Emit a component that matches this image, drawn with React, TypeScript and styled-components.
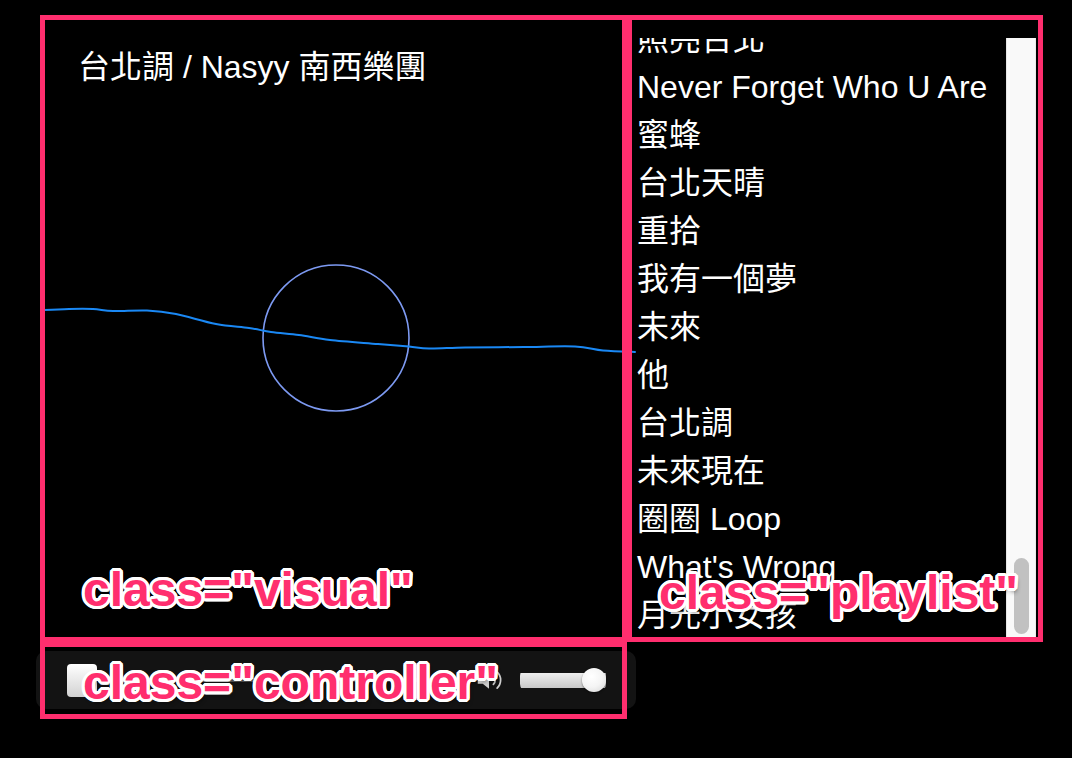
import React from 'react';
import styled, { createGlobalStyle, css } from 'styled-components';

const PINK = '#ff2e6e';

const Global = createGlobalStyle`
  html, body { margin: 0; padding: 0; background: #000; }
  body {
    font-family: "Liberation Sans", "Noto Sans CJK TC", sans-serif;
    color: #fff;
    overflow: hidden;
  }
`;

const pinkBox = css`
  position: relative;
  &::after {
    content: '';
    position: absolute;
    border: 5px solid ${PINK};
    pointer-events: none;
    z-index: 3;
  }
`;

const Stage = styled.div`
  width: 1072px;
  height: 758px;
  box-sizing: border-box;
  padding: 15px 0 0 40px;
  display: flex;
  flex-direction: column;
`;

const TopRow = styled.div`
  display: flex;
`;

const Visual = styled.section`
  ${pinkBox}
  &::after { inset: 0; }
  width: 587px;
  height: 627px;
  box-sizing: border-box;
  padding: 5px;
  display: flex;
  flex-direction: column;
`;

const Title = styled.div`
  padding: 29px 0 0 33px;
  height: 66px;
  box-sizing: border-box;
  font-size: 32px;
  line-height: 36px;
  white-space: nowrap;
`;

const Canvas = styled.svg`
  display: block;
  overflow: visible;
  position: relative;
  z-index: 2;
`;

const Playlist = styled.section`
  ${pinkBox}
  &::after { inset: 0; }
  width: 416px;
  height: 627px;
  box-sizing: border-box;
  padding: 23px 7px 3px 5px;
  display: flex;
`;

const List = styled.ul`
  flex: 1;
  margin: 0;
  padding: 0;
  list-style: none;
  overflow: hidden;
  display: flex;
  flex-direction: column;
  justify-content: flex-end;
`;

const Item = styled.li`
  flex: none;
  height: 48px;
  line-height: 48px;
  padding-left: 5px;
  font-size: 32px;
  white-space: nowrap;
`;

const Track = styled.div`
  width: 30px;
  box-sizing: border-box;
  background: #f9f9f9;
  border-left: 1px solid #e6e6e6;
  border-right: 1px solid #ececec;
  display: flex;
  flex-direction: column;
  justify-content: flex-end;
  padding: 0 6px 5px 7px;
`;

const Thumb = styled.div`
  height: 76px;
  border-radius: 8px;
  background: #c1c1c1;
`;

const Controller = styled.div`
  ${pinkBox}
  &::after { top: -9px; left: 4px; right: 9px; bottom: -10px; }
  margin: 9px 0 0 -4px;
  width: 600px;
  height: 58px;
  box-sizing: border-box;
  background: #131313;
  border-radius: 10px;
  padding: 0 30px 0 31px;
  display: flex;
  align-items: center;
`;

const PlayButton = styled.div`
  width: 30px;
  height: 33px;
  border-radius: 4px;
  background: linear-gradient(#ffffff, #d2d2d2);
  flex: none;
`;

const Progress = styled.div`
  flex: 1;
  height: 4px;
  margin: 0 10px 0 12px;
  border-radius: 2px;
  background: #555;
`;

const VolumeIcon = styled.svg`
  flex: none;
  width: 30px;
  height: 30px;
  color: #d0d0d0;
`;

const Slider = styled.div`
  flex: none;
  margin-left: 16px;
  width: 86px;
  height: 24px;
  display: flex;
  align-items: center;
  justify-content: flex-end;
  border-radius: 8px;
  background: linear-gradient(#eeeeee, #c8c8c8) center / 100% 15px no-repeat;
`;

const Knob = styled.div`
  width: 24px;
  height: 24px;
  border-radius: 50%;
  background: radial-gradient(circle at 40% 35%, #ffffff 0%, #f4f4f4 50%, #d6d6d6 100%);
  box-shadow: 0 1px 2px rgba(0, 0, 0, 0.5);
`;

const Label = styled.span<{ $left: number; $top: number }>`
  position: absolute;
  left: ${p => p.$left}px;
  top: ${p => p.$top}px;
  z-index: 5;
  font-family: "Liberation Sans", Arial, sans-serif;
  font-weight: 700;
  font-size: 48px;
  line-height: 48px;
  color: ${PINK};
  white-space: nowrap;
  text-shadow:
    3px 0 0 #fff, -3px 0 0 #fff, 0 3px 0 #fff, 0 -3px 0 #fff,
    2px 2px 0 #fff, -2px -2px 0 #fff, 2px -2px 0 #fff, -2px 2px 0 #fff,
    3px 1px 0 #fff, -3px 1px 0 #fff, 1px 3px 0 #fff, -1px 3px 0 #fff,
    3px -1px 0 #fff, -3px -1px 0 #fff, 1px -3px 0 #fff, -1px -3px 0 #fff,
    2px 4px 4px rgba(0, 0, 0, 0.45);
`;

const songs = [
  '照亮台北',
  'Never Forget Who U Are',
  '蜜蜂',
  '台北天晴',
  '重拾',
  '我有一個夢',
  '未來',
  '他',
  '台北調',
  '未來現在',
  '圈圈 Loop',
  "What's Wrong",
  '月光小女孩',
];

const wave: [number, number][] = [
  [44, 310], [69, 309], [93, 309], [113, 311], [147, 310.5], [176, 314],
  [216, 324], [249, 328], [271, 332], [299, 335], [330, 340], [378, 344],
  [409, 346.5], [429, 348.5], [465, 347.5], [524, 347], [575, 346.5],
  [603, 350.5], [635, 352],
];

function smoothPath(pts: [number, number][]): string {
  let d = `M${pts[0][0]},${pts[0][1]}`;
  for (let i = 0; i < pts.length - 1; i++) {
    const p0 = pts[i - 1] || pts[i];
    const p1 = pts[i];
    const p2 = pts[i + 1];
    const p3 = pts[i + 2] || p2;
    const c1x = p1[0] + (p2[0] - p0[0]) / 6;
    const c1y = p1[1] + (p2[1] - p0[1]) / 6;
    const c2x = p2[0] - (p3[0] - p1[0]) / 6;
    const c2y = p2[1] - (p3[1] - p1[1]) / 6;
    d += ` C${c1x.toFixed(1)},${c1y.toFixed(1)} ${c2x.toFixed(1)},${c2y.toFixed(1)} ${p2[0]},${p2[1]}`;
  }
  return d;
}

export default function App() {
  const canvasTop = 20 + 66;
  const canvasH = 637 - canvasTop;
  return (
    <>
      <Global />
      <Stage>
        <TopRow>
          <Visual className="visual">
            <Title>台北調 / Nasyy 南西樂團</Title>
            <Canvas
              width={577}
              height={canvasH}
              viewBox={`45 ${canvasTop} 577 ${canvasH}`}
            >
              <circle cx={336} cy={338} r={73} fill="none" stroke="#7d9af2" strokeWidth={1.6} />
              <path
                d={smoothPath(wave)}
                fill="none"
                stroke="#1a88f4"
                strokeWidth={2}
                strokeLinecap="round"
              />
            </Canvas>
            <Label $left={43} $top={551}>class="visual"</Label>
          </Visual>
          <Playlist className="playlist">
            <List>
              {songs.map(s => (
                <Item key={s}>{s}</Item>
              ))}
            </List>
            <Track>
              <Thumb />
            </Track>
            <Label $left={32} $top={554}>class="playlist"</Label>
          </Playlist>
        </TopRow>
        <Controller className="controller">
          <PlayButton />
          <Progress />
          <VolumeIcon viewBox="0 0 24 24" fill="none" stroke="currentColor" strokeWidth={1.4} strokeLinecap="round">
            <path d="M3 9h4l5-4v14l-5-4H3z" fill="currentColor" stroke="none" />
            <path d="M15.5 8.5a5 5 0 0 1 0 7" />
            <path d="M18.5 5.5a9 9 0 0 1 0 13" />
          </VolumeIcon>
          <Slider>
            <Knob />
          </Slider>
          <Label $left={47} $top={8}>class="controller"</Label>
        </Controller>
      </Stage>
    </>
  );
}
